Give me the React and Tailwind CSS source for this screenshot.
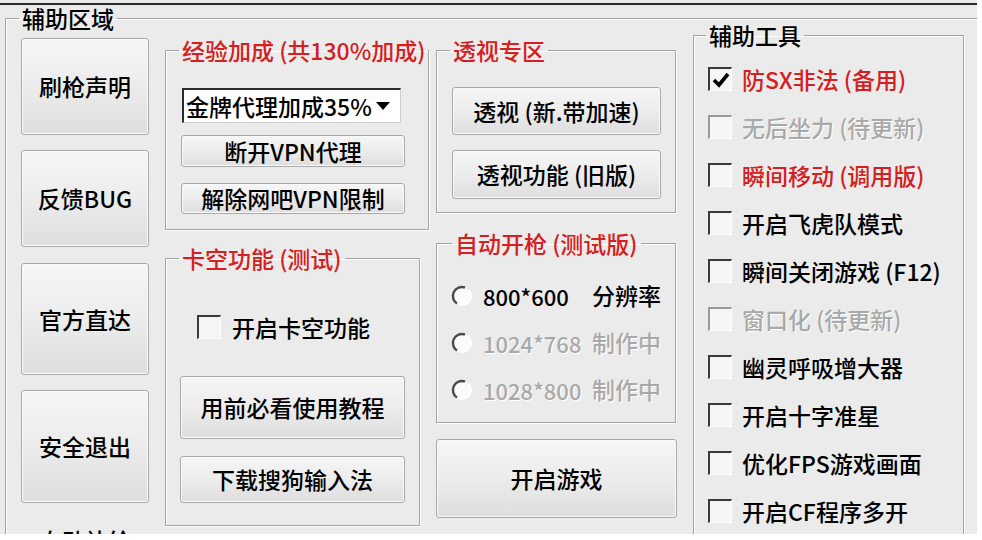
import React from "react";

const WinButton = ({ className = "", children }) => (
  <button className={`flex items-center justify-center whitespace-nowrap rounded-[3px] border border-[#a9a9a9] bg-linear-to-b from-[#f6f6f6] via-[#ececec] to-[#dedede] text-[23px] leading-none text-black shadow-[inset_0_0_0_1px_#fafafa] ${className}`}>
    {children}
  </button>
);

const GroupBox = ({ title, red = false, legendClass = "ml-[13px]", className = "", children }) => (
  <fieldset className={`border border-[#a3a3a3] shadow-[inset_1px_1px_0_#fff,1px_1px_0_#fff] ${className}`}>
    <legend className={`px-[3px] whitespace-nowrap text-[23px] leading-[26px] ${red ? "text-[#d42020]" : "text-black"} ${legendClass}`}>
      {title}
    </legend>
    {children}
  </fieldset>
);

const Check = ({ checked = false, disabled = false }) => (
  <span
    className={`w-[24px] h-[24px] shrink-0 flex items-center justify-center border-l-2 border-t-2 border-r border-b border-r-white border-b-white bg-[#f5f5f5] ${
      disabled ? "border-l-[#9a9a9a] border-t-[#9a9a9a]" : "border-l-[#3a3a3a] border-t-[#3a3a3a]"
    }`}
  >
    {checked && (
      <svg width="18" height="16" viewBox="0 0 18 16">
        <path d="M2 8 L7 13 L16 2" stroke="#000" strokeWidth="3.6" fill="none" />
      </svg>
    )}
  </span>
);

const Radio = () => (
  <svg width="22" height="22" viewBox="0 0 22 22" className="shrink-0">
    <circle cx="11" cy="11" r="9" fill="#fbfbfb" />
    <path d="M4.6 17.4 A9 9 0 0 0 17.4 4.6" stroke="#ffffff" strokeWidth="2" fill="none" />
    <path d="M14 2.5 A9 9 0 0 0 6 18.5" stroke="#4a4a4a" strokeWidth="2.4" fill="none" />
  </svg>
);

const App = () => {
  const tools = [
    { label: "防SX非法 (备用)", tone: "red", checked: true },
    { label: "无后坐力 (待更新)", tone: "off" },
    { label: "瞬间移动 (调用版)", tone: "red" },
    { label: "开启飞虎队模式" },
    { label: "瞬间关闭游戏 (F12)" },
    { label: "窗口化 (待更新)", tone: "off" },
    { label: "幽灵呼吸增大器" },
    { label: "开启十字准星" },
    { label: "优化FPS游戏画面" },
    { label: "开启CF程序多开" },
  ];

  const modes = [
    { res: "800*600", note: "分辨率", off: false },
    { res: "1024*768", note: "制作中", off: true },
    { res: "1028*800", note: "制作中", off: true },
  ];

  return (
    <div className="w-[982px] h-[540px] bg-white overflow-hidden font-medium font-['Noto_Sans_CJK_SC',sans-serif]">
      <div className="w-[977px] h-[534px] bg-[#ebebeb] overflow-hidden flex flex-col">
        {/* top edge */}
        <div className="h-[3px] shrink-0" />
        <div className="h-[2px] shrink-0 bg-[#2a2a2a]" />

        {/* 辅助区域 */}
        <fieldset className="ml-[5px] w-[990px] h-[540px] shrink-0 border border-[#a3a3a3] shadow-[inset_1px_1px_0_#fff]">
          <legend className="ml-[13px] px-[3px] text-[23px] leading-[26px] text-black">辅助区域</legend>

          <div className="flex items-start">
            {/* left buttons */}
            <div className="ml-[15px] mt-[7px] w-[128px] flex flex-col">
              <WinButton className="h-[97px]">刷枪声明</WinButton>
              <WinButton className="h-[97px] mt-[15px]">反馈BUG</WinButton>
              <WinButton className="h-[112px] mt-[16px]">官方直达</WinButton>
              <WinButton className="h-[113px] mt-[15px]">安全退出</WinButton>
              <div className="mt-[24px] pl-[18px] text-[23px] leading-[26px] text-black">自动补给</div>
            </div>

            {/* column 2 */}
            <div className="ml-[16px] mt-[6px] w-[255px] flex flex-col">
              <GroupBox title="经验加成 (共130%加成)" red className="h-[193px]">
                <div className="flex flex-col">
                  <div className="ml-[16px] mt-[25px] w-[219px] h-[35px] bg-white border-l-2 border-t-2 border-r border-b border-l-[#2b2b2b] border-t-[#2b2b2b] border-r-[#cfcfcf] border-b-[#cfcfcf] flex items-center">
                    <span className="pl-[2px] text-[23px] leading-none text-black">金牌代理加成35%</span>
                    <svg className="ml-auto mr-[10px]" width="14" height="8" viewBox="0 0 14 8">
                      <path d="M0 0H14L7 8Z" fill="#000" />
                    </svg>
                  </div>
                  <WinButton className="ml-[15px] mt-[12px] w-[224px] h-[32px]">断开VPN代理</WinButton>
                  <WinButton className="ml-[15px] mt-[16px] w-[224px] h-[31px]">解除网吧VPN限制</WinButton>
                </div>
              </GroupBox>

              <GroupBox title="卡空功能 (测试)" red className="mt-[15px] h-[281px]">
                <div className="flex flex-col">
                  <div className="ml-[31px] mt-[44px] flex items-center">
                    <Check />
                    <span className="ml-[11px] text-[23px] leading-none text-black">开启卡空功能</span>
                  </div>
                  <WinButton className="ml-[14px] mt-[37px] w-[225px] h-[63px]">用前必看使用教程</WinButton>
                  <WinButton className="ml-[14px] mt-[17px] w-[225px] h-[47px]">下载搜狗输入法</WinButton>
                </div>
              </GroupBox>
            </div>

            {/* column 3 */}
            <div className="ml-[16px] mt-[6px] w-[241px] flex flex-col">
              <GroupBox title="透视专区" red legendClass="ml-[13px]" className="w-[240px] h-[176px]">
                <div className="flex flex-col">
                  <WinButton className="ml-[15px] mt-[24px] w-[209px] h-[48px]">透视 (新.带加速)</WinButton>
                  <WinButton className="ml-[15px] mt-[15px] w-[209px] h-[49px]">透视功能 (旧版)</WinButton>
                </div>
              </GroupBox>

              <GroupBox title="自动开枪 (测试版)" red legendClass="ml-[15px]" className="w-[240px] mt-[17px] h-[193px]">
                <div className="mt-[16px] flex flex-col">
                  {modes.map((m) => (
                    <div key={m.res} className="h-[47px] pl-[14px] flex items-center">
                      <Radio />
                      <span
                        className={`ml-[10px] w-[109px] text-[22px] leading-none ${
                          m.off ? "text-[#a9a9a9] [text-shadow:1px_1px_0_#fff]" : "text-black"
                        }`}
                      >
                        {m.res}
                      </span>
                      <span
                        className={`text-[23px] leading-none ${
                          m.off ? "text-[#a9a9a9] [text-shadow:1px_1px_0_#fff]" : "text-black"
                        }`}
                      >
                        {m.note}
                      </span>
                    </div>
                  ))}
                </div>
              </GroupBox>

              <WinButton className="mt-[16px] w-[241px] h-[79px]">开启游戏</WinButton>
            </div>

            {/* column 4 */}
            <div className="ml-[16px] -mt-[9px] w-[271px]">
              <GroupBox title="辅助工具" legendClass="ml-[12px]" className="w-[271px] h-[530px]">
                <div className="pt-[7px] flex flex-col">
                  {tools.map((t) => (
                    <div key={t.label} className="h-[48px] pl-[14px] flex items-center">
                      <Check checked={t.checked} disabled={t.tone === "off"} />
                      <span
                        className={`ml-[10px] text-[23px] leading-none ${
                          t.tone === "red"
                            ? "text-[#d42020]"
                            : t.tone === "off"
                            ? "text-[#a9a9a9] [text-shadow:1px_1px_0_#fff]"
                            : "text-black"
                        }`}
                      >
                        {t.label}
                      </span>
                    </div>
                  ))}
                </div>
              </GroupBox>
            </div>
          </div>
        </fieldset>
      </div>
    </div>
  );
};

export default App;
